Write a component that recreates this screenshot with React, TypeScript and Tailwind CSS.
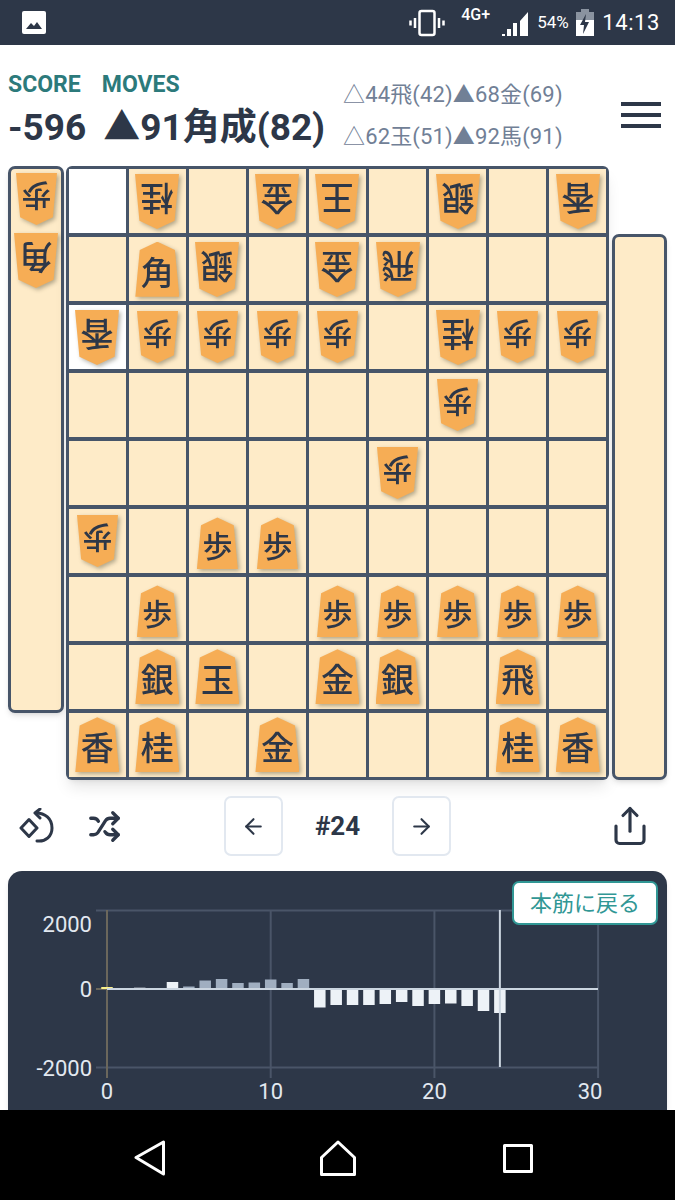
import React from "react";
import { ArrowLeft, ArrowRight, Share, Shuffle } from "lucide-react";

type P = { k: string; r?: boolean } | null;
const u = (k: string): P => ({ k });
const d = (k: string): P => ({ k, r: true });
const _ = null;

const board: P[][] = [
  [_, d("桂"), _, d("金"), d("王"), _, d("銀"), _, d("香")],
  [_, u("角"), d("銀"), _, d("金"), d("飛"), _, _, _],
  [d("香"), d("歩"), d("歩"), d("歩"), d("歩"), _, d("桂"), d("歩"), d("歩")],
  [_, _, _, _, _, _, d("歩"), _, _],
  [_, _, _, _, _, d("歩"), _, _, _],
  [d("歩"), _, u("歩"), u("歩"), _, _, _, _, _],
  [_, u("歩"), _, _, u("歩"), u("歩"), u("歩"), u("歩"), u("歩")],
  [_, u("銀"), u("玉"), _, u("金"), u("銀"), _, u("飛"), _],
  [u("香"), u("桂"), _, u("金"), _, _, _, u("桂"), u("香")],
];

function Piece({ p }: { p: { k: string; r?: boolean } }) {
  const small = p.k === "歩";
  return (
    <div className={`drop-shadow-[2px_2px_2px_rgba(40,40,20,0.35)] ${small && !p.r ? "mt-[5px]" : ""}`}>
      <div
        className={`${small ? "w-[41px] h-[52px] text-[30px]" : "w-[44px] h-[55px] text-[33px]"} ${
          p.r ? "rotate-180" : ""
        } bg-[#f6ad55] text-[#2d3748] font-medium [clip-path:polygon(50%_0,90%_15%,100%_100%,0_100%,10%_15%)] flex items-center justify-center pt-[8px] leading-none`}
      >
        {p.k}
      </div>
    </div>
  );
}

const bars: [number, string][] = [
  [2, "#faf089"], [0.5, "#edf2f7"], [1.3, "#edf2f7"], [0.6, "#edf2f7"], [7, "#edf2f7"],
  [2.5, "#a0aec0"], [8.5, "#a0aec0"], [10, "#a0aec0"], [6, "#a0aec0"], [6.5, "#a0aec0"],
  [9.5, "#a0aec0"], [6, "#a0aec0"], [10, "#a0aec0"], [-18.5, "#edf2f7"], [-16, "#edf2f7"],
  [-16, "#edf2f7"], [-16, "#edf2f7"], [-15, "#edf2f7"], [-13, "#edf2f7"], [-17, "#edf2f7"],
  [-15, "#edf2f7"], [-14.5, "#edf2f7"], [-17, "#edf2f7"], [-22, "#edf2f7"], [-24, "#edf2f7"],
];

function Chart() {
  // svg origin = panel origin (8, 871)
  const X = (n: number) => 99 + n * 16.37;
  const Y0 = 118;
  return (
    <svg width="659" height="239" viewBox="0 0 659 239" className="block">
      <g stroke="#4a5568" strokeWidth="2" fill="none">
        <path d="M88 39.5H590M88 196.5H590" />
        <path d={`M${X(10)} 39V207M${X(20)} 39V207M${X(30)} 39V207`} />
      </g>
      <path d="M99 39V207" stroke="#6b675c" strokeWidth="2" fill="none" />
      <path d={`M88 ${Y0}H99`} stroke="#6b675c" strokeWidth="2" fill="none" />
      {bars.map(([h, c], i) => (
        <rect
          key={i}
          x={X(i) - 5.75}
          y={h >= 0 ? Y0 - h : Y0}
          width="11.5"
          height={Math.abs(h)}
          fill={c}
        />
      ))}
      <path d={`M99 ${Y0}H590M${X(24)} 39V196`} stroke="#cbd5e0" strokeWidth="2" fill="none" />
      <g fill="#e2e8f0" fontSize="22" fontFamily="Roboto, sans-serif">
        <text x="84" y="61" textAnchor="end">2000</text>
        <text x="84" y="126" textAnchor="end">0</text>
        <text x="84" y="205" textAnchor="end">-2000</text>
        <text x="99" y="228" textAnchor="middle">0</text>
        <text x={X(10)} y="228" textAnchor="middle">10</text>
        <text x={X(20)} y="228" textAnchor="middle">20</text>
        <text x="582" y="228" textAnchor="middle">30</text>
      </g>
    </svg>
  );
}

export default function App() {
  return (
    <div className="w-[675px] h-[1200px] flex flex-col overflow-hidden bg-white font-['Roboto','Noto_Sans_CJK_JP',sans-serif] text-[#2d3748]">
      {/* status bar */}
      <div className="h-[45px] shrink-0 bg-[#2d3748] flex items-center text-white relative">
        <svg width="26" height="26" viewBox="0 0 26 26" className="ml-[21px]">
          <rect x="1" y="1" width="24" height="23" rx="2" fill="#fff" />
          <path d="M5 19l5-6 3 3 3-4 5 7z" fill="#2d3748" />
        </svg>
        <div className="ml-auto flex items-center mr-[15px]">
          <svg width="36" height="28" viewBox="0 0 36 28" fill="none" stroke="#fff" strokeWidth="2.5">
            <rect x="10.5" y="2" width="15" height="24" rx="2" />
            <path d="M6 9v10M1.5 11.5v5M30 9v10M34.5 11.5v5" />
          </svg>
          <span className="text-[16px] font-medium ml-[16px] w-[40px] -mt-[15px] leading-none">4G+</span>
          <svg width="28" height="28" viewBox="0 0 28 28" className="mt-[2px]" fill="#fff">
            <path d="M1 26h3v-2H1zM6 26h4v-7H6zM12 26h4v-13h-4zM19 26h8V2l-8 9z" />
          </svg>
          <span className="text-[17px] ml-[8px] w-[39px]">54%</span>
          <svg width="18" height="27" viewBox="0 0 18 27">
            <rect x="5" y="0" width="8" height="4" fill="#8a93a0" />
            <rect x="0" y="3" width="18" height="9" fill="#8a93a0" />
            <rect x="0" y="11" width="18" height="16" fill="#fff" />
            <path d="M10 5L4 16h4l-1 9 6-12H9z" fill="#2d3748" />
          </svg>
          <span className="text-[22px] ml-[8px] tracking-[0.6px]">14:13</span>
        </div>
      </div>

      {/* header */}
      <div className="h-[121px] shrink-0 flex px-[8px] pt-[27px]">
        <div className="w-[335px] shrink-0">
          <div className="flex gap-[21px] text-[23px] leading-[25px] font-bold text-[#2c7a7b]">
            <span>SCORE</span>
            <span>MOVES</span>
          </div>
          <div className="flex gap-[17px] text-[37px] leading-[44px] font-bold mt-[9px] whitespace-nowrap">
            <span>-596</span>
            <span>▲91角成(82)</span>
          </div>
        </div>
        <div className="text-[22px] leading-[42px] tracking-[0.15px] text-[#718096] whitespace-nowrap pt-[2px]">
          <div>△44飛(42)▲68金(69)</div>
          <div>△62玉(51)▲92馬(91)</div>
        </div>
        <div className="ml-auto mr-[6px] mt-[30px] flex flex-col gap-[7px] w-[40px] h-[26px]">
          <div className="h-[4px] bg-[#2d3748]" />
          <div className="h-[4px] bg-[#2d3748]" />
          <div className="h-[4px] bg-[#2d3748]" />
        </div>
      </div>

      {/* board */}
      <div className="h-[614px] shrink-0 flex pl-[8px]">
        <div className="w-[56px] h-[547px] self-start bg-[#feebc8] border-[3px] border-[#475569] rounded-[7px] shadow-md flex flex-col items-center pt-[4px] gap-[8px]">
          <Piece p={{ k: "歩", r: true }} />
          <Piece p={{ k: "角", r: true }} />
        </div>
        <div className="ml-[2px] w-[543px] h-[614px] bg-[#475569] rounded-[6px] p-[3px] grid grid-cols-9 grid-rows-9 gap-[3.5px] shadow-lg">
          {board.flat().map((p, i) => (
            <div
              key={i}
              className={`${i === 0 || i === 18 ? "bg-white" : "bg-[#feebc8]"} flex items-center justify-center`}
            >
              {p && <Piece p={p} />}
            </div>
          ))}
        </div>
        <div className="ml-[3px] w-[55px] h-[546px] self-end bg-[#feebc8] border-[3px] border-[#475569] rounded-[7px] shadow-md" />
      </div>

      {/* controls */}
      <div className="h-[60px] mt-[16px] shrink-0 grid grid-cols-[1fr_auto_1fr] items-center">
        <div className="flex items-center pl-[19px] gap-[33px]">
          <svg width="36" height="36" viewBox="0 0 36 36" fill="none" stroke="#2d3748" strokeWidth="3" strokeLinejoin="round" strokeLinecap="round">
            <path d="M10 11.5L18 20l-8 8.500L2 20z" />
            <path d="M17 5c9 0 16 5.500 16 15 0 8-6 14-15 13" />
            <path d="M21 1l-5 4 5 5" />
          </svg>
          <Shuffle size={33} strokeWidth={2.4} color="#2d3748" />
        </div>
        <div className="flex items-center">
          <div className="w-[59px] h-[60px] border-2 border-[#e2e8f0] rounded-[7px] flex items-center justify-center">
            <ArrowLeft size={25} strokeWidth={2} />
          </div>
          <div className="w-[109px] text-center text-[26px] font-bold">#24</div>
          <div className="w-[59px] h-[60px] border-2 border-[#e2e8f0] rounded-[7px] flex items-center justify-center">
            <ArrowRight size={25} strokeWidth={2} />
          </div>
        </div>
        <div className="flex justify-end pr-[24px]">
          <Share size={42} strokeWidth={1.8} />
        </div>
      </div>

      {/* chart */}
      <div className="mx-[8px] mt-[15px] h-[239px] shrink-0 bg-[#2d3748] rounded-t-[14px] relative shadow-md">
        <Chart />
        <div className="absolute top-[10px] right-[9px] w-[146px] h-[44px] bg-white border-2 border-[#319795] rounded-[7px] flex items-center justify-center text-[22px] text-[#319795]">
          本筋に戻る
        </div>
      </div>

      {/* nav bar */}
      <div className="h-[90px] shrink-0 bg-black relative flex items-center pt-[6px]">
        <svg width="32" height="36" viewBox="0 0 32 36" className="ml-[134px]" fill="none" stroke="#fff" strokeWidth="3" strokeLinejoin="round">
          <path d="M29.500 2v32L2 17.500z" />
        </svg>
        <svg width="36" height="36" viewBox="0 0 36 36" className="ml-[154px]" fill="none" stroke="#fff" strokeWidth="3" strokeLinejoin="round">
          <path d="M18 2L34.500 17.500V34.500H1.500V17.500z" />
        </svg>
        <svg width="30" height="29" viewBox="0 0 30 29" className="ml-[147px]" fill="none" stroke="#fff" strokeWidth="3" strokeLinejoin="round">
          <rect x="1.500" y="1.500" width="27" height="26" />
        </svg>
      </div>
    </div>
  );
}
